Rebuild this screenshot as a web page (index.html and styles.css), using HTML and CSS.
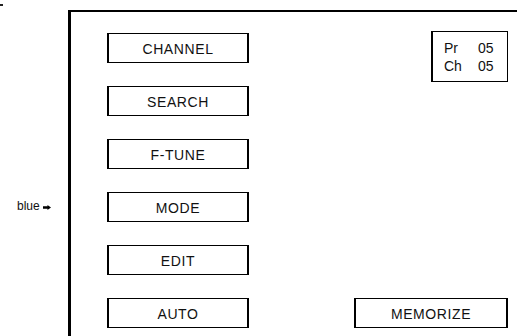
FILE: index.html
```html
<!DOCTYPE html>
<html>
<head>
<meta charset="utf-8">
<link rel="stylesheet" href="styles.css">
</head>
<body>
<div class="page">
  <div class="side">
    <span class="tick"></span>
    <div class="label">blue <svg class="arrow" width="8" height="5" viewBox="0 0 8 5"><path d="M0 1.2H4.5V0L8 2.5L4.5 5V3.8H0Z" fill="#000"/></svg></div>
  </div>
  <div class="frame">
    <div class="menu">
      <div class="btn">CHANNEL</div>
      <div class="btn">SEARCH</div>
      <div class="btn">F-TUNE</div>
      <div class="btn">MODE</div>
      <div class="btn">EDIT</div>
      <div class="btn">AUTO</div>
    </div>
    <div class="right">
      <div class="info">
        <span>Pr</span><span>05</span>
        <span>Ch</span><span>05</span>
      </div>
      <div class="btn wide">MEMORIZE</div>
    </div>
  </div>
</div>
</body>
</html>
```
FILE: styles.css
```css
html, body {
  margin: 0;
  padding: 0;
  background: #fff;
}
body {
  width: 517px;
  height: 336px;
  overflow: hidden;
  font-family: "Liberation Sans", Arial, sans-serif;
  color: #111;
}
.page {
  display: flex;
  height: 336px;
}
.side {
  width: 68px;
  display: flex;
  flex-direction: column;
}
.tick {
  display: block;
  width: 3px;
  height: 2px;
  margin: 4px 0 0 0;
  background: #222;
}
.label {
  margin-top: 194px;
  margin-left: 17px;
  font-size: 12px;
  line-height: 13px;
  display: flex;
  align-items: center;
  gap: 3px;
}
.arrow {
  display: block;
  margin-top: 1px;
}
.frame {
  flex: 1;
  margin-top: 10px;
  border-top: 2px solid #000;
  border-left: 3px solid #000;
  display: flex;
  justify-content: space-between;
  padding: 21px 9px 0 36px;
}
.menu {
  display: flex;
  flex-direction: column;
  gap: 23px;
}
.btn {
  box-sizing: border-box;
  width: 142px;
  height: 30px;
  border: 1px solid #000;
  border-left-width: 2px;
  border-right-width: 2px;
  display: flex;
  align-items: center;
  justify-content: center;
  font-size: 14px;
  letter-spacing: 0.6px;
  padding-top: 1px;
}
.right {
  display: flex;
  flex-direction: column;
  justify-content: space-between;
  align-items: flex-end;
  padding-top: 0;
  margin-top: -2px;
  padding-bottom: 8px;
}
.info {
  box-sizing: border-box;
  width: 77px;
  height: 51px;
  border: 1px solid #000;
  border-left-width: 2px;
  display: grid;
  grid-template-columns: 34px auto;
  align-content: center;
  padding-left: 11px;
  font-size: 14px;
  line-height: 18px;
}
.wide {
  width: 154px;
}
```
